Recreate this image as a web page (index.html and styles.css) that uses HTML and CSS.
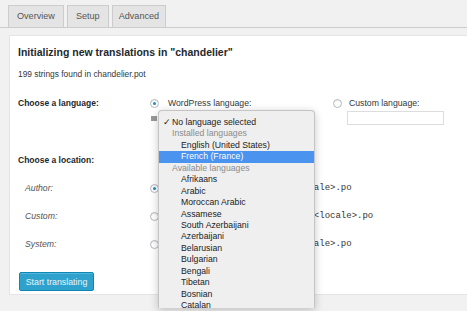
FILE: index.html
```html
<!DOCTYPE html>
<html lang="en">
    <head>
        <meta charset="utf-8" />
        <title>Loco Translate - New language</title>
        <link rel="stylesheet" href="styles.css">
    </head>
    <body>
        <nav class="tabs">
            <a class="tabs_item">Overview</a>
            <a class="tabs_item">Setup</a>
            <a class="tabs_item">Advanced</a>
        </nav>

        <main class="panel">
            <h2 class="panel_title">Initializing new translations in "chandelier"</h2>
            <p class="panel_count">199 strings found in chandelier.pot</p>

            <div class="campo">
                <div class="campo_label">Choose a language:</div>
                <div class="campo_opciones">
                    <div class="opcion opcion--wp">
                        <div class="opcion_linea"><span class="radio radio--on"></span>WordPress language:</div>
                        <div class="selector">
                            <span class="flag"></span>
                            <ul class="desplegable">
                                <li class="desplegable_item desplegable_item--actual"><span class="check">✓</span>No language selected</li>
                                <li class="desplegable_grupo">Installed languages</li>
                                <li class="desplegable_item">English (United States)</li>
                                <li class="desplegable_item desplegable_item--activo">French (France)</li>
                                <li class="desplegable_grupo">Available languages</li>
                                <li class="desplegable_item">Afrikaans</li>
                                <li class="desplegable_item">Arabic</li>
                                <li class="desplegable_item">Moroccan Arabic</li>
                                <li class="desplegable_item">Assamese</li>
                                <li class="desplegable_item">South Azerbaijani</li>
                                <li class="desplegable_item">Azerbaijani</li>
                                <li class="desplegable_item">Belarusian</li>
                                <li class="desplegable_item">Bulgarian</li>
                                <li class="desplegable_item">Bengali</li>
                                <li class="desplegable_item">Tibetan</li>
                                <li class="desplegable_item">Bosnian</li>
                                <li class="desplegable_item">Catalan</li>
                            </ul>
                        </div>
                    </div>
                    <div class="opcion">
                        <div class="opcion_linea"><span class="radio"></span>Custom language:</div>
                        <div class="entrada"></div>
                    </div>
                </div>
            </div>

            <div class="ubicacion">
                <div class="campo_label">Choose a location:</div>
                <div class="ubicacion_fila">
                    <span class="ubicacion_nombre">Author:</span>
                    <span class="radio radio--on"></span>
                    <code class="ruta">themes/chandelier/lang/&lt;locale&gt;.po</code>
                </div>
                <div class="ubicacion_fila">
                    <span class="ubicacion_nombre">Custom:</span>
                    <span class="radio"></span>
                    <code class="ruta">languages/theme/chandelier-&lt;locale&gt;.po</code>
                </div>
                <div class="ubicacion_fila">
                    <span class="ubicacion_nombre">System:</span>
                    <span class="radio"></span>
                    <code class="ruta">languages/themes/theme-&lt;locale&gt;.po</code>
                </div>
            </div>

            <button class="boton">Start translating</button>
        </main>
    </body>
</html>
```

FILE: styles.css
```css
* {
    padding: 0;
    margin: 0;
    box-sizing: border-box;
}

html {
    overflow: hidden;
}

body {
    min-height: 100vh;
    font-family: "Liberation Sans", Arial, Helvetica, sans-serif;
    background-color: #f1f1f1;
    color: #32373c;
    font-size: 8.7px;
}

/* PESTAÑAS */
.tabs {
    display: flex;
    gap: 3px;
    height: 28px;
    padding: 5px 0 0 8px;
    border-bottom: 1px solid #ccc;
}

.tabs_item {
    height: 22px;
    padding: 0 8px;
    line-height: 21px;
    font-size: 9.1px;
    color: #555;
    background-color: #e4e4e4;
    border: 1px solid #ccc;
    border-bottom: none;
}

.tabs_item:last-child {
    padding: 0 6px;
}

/* PANEL */
.panel {
    margin: 7px 0 0 9px;
    padding: 0 0 3px 8px;
    background-color: #fff;
    border: 1px solid #e5e5e5;
    border-right: none;
}

.panel_title {
    margin-top: 8px;
    line-height: 16px;
    font-size: 10.5px;
    font-weight: 700;
    color: #23282d;
}

.panel_count {
    margin-top: 8px;
    line-height: 12px;
    font-size: 8.4px;
}

.campo {
    display: grid;
    grid-template-columns: 132px 1fr;
    margin-top: 16px;
}

.campo_label {
    line-height: 14px;
    font-weight: 700;
    font-size: 8.5px;
    color: #23282d;
}

.campo_opciones {
    display: flex;
}

.opcion {
    display: flex;
    flex-direction: column;
}

.opcion--wp {
    width: 183px;
}

.opcion_linea {
    display: flex;
    align-items: center;
    height: 14px;
}

.radio {
    width: 9px;
    height: 9px;
    margin-right: 9px;
    border: 1px solid #b4b9be;
    border-radius: 50%;
    background-color: #fff;
    display: flex;
    justify-content: center;
    align-items: center;
    box-shadow: inset 0 1px 1px rgba(0, 0, 0, .08);
}

.opcion .radio {
    margin-right: 7px;
}

.opcion--wp .radio {
    margin-right: 9px;
}

.radio--on::after {
    content: "";
    width: 3px;
    height: 3px;
    border-radius: 50%;
    background-color: #1e8cbe;
}

/* SELECTOR DE IDIOMA */
.selector {
    position: relative;
    display: flex;
    align-items: center;
    height: 14px;
}

.flag {
    width: 6px;
    height: 5px;
    margin: 2px 0 0 1px;
    background-color: #999;
}

.desplegable {
    position: absolute;
    left: 8px;
    top: 0;
    width: 157px;
    height: 198px;
    padding-top: 6px;
    overflow: hidden;
    list-style: none;
    background-color: #efefef;
    border: 1px solid #c4c4c4;
    border-bottom: none;
    border-radius: 4px 4px 0 0;
    box-shadow: 0 2px 8px rgba(0, 0, 0, .22);
    font-size: 8.7px;
    color: #222;
}

.desplegable_item,
.desplegable_grupo {
    display: block;
    height: 11.45px;
    line-height: 11px;
    padding-left: 22px;
    white-space: nowrap;
}

.desplegable_grupo {
    padding-left: 13px;
    color: #8c8c8c;
}

.desplegable_item--actual {
    padding-left: 4px;
}

.check {
    display: inline-block;
    width: 9px;
}

.desplegable_item--activo {
    background-color: #4a93ee;
    color: #fff;
}

.entrada {
    width: 97px;
    height: 14px;
    margin: 1px 0 0 14px;
    border: 1px solid #ddd;
    background-color: #fff;
}

/* UBICACION */
.ubicacion {
    margin-top: 28px;
}

.ubicacion_fila {
    display: flex;
    align-items: center;
    height: 14px;
    margin-top: 14px;
}

.ubicacion_nombre {
    width: 132px;
    padding-left: 7px;
    font-style: italic;
    color: #555;
}

.ruta {
    font-family: "Liberation Mono", "Courier New", monospace;
    font-size: 9px;
    color: #333;
}

.boton {
    margin: 21px 0 0 1px;
    width: 75px;
    height: 19px;
    font-family: inherit;
    font-size: 8.8px;
    color: #e8f4fa;
    background-color: #2ea2cc;
    border: 1px solid #0e87b5;
    border-radius: 2px;
    box-shadow: inset 0 1px 0 rgba(120, 200, 230, .5);
}
```
